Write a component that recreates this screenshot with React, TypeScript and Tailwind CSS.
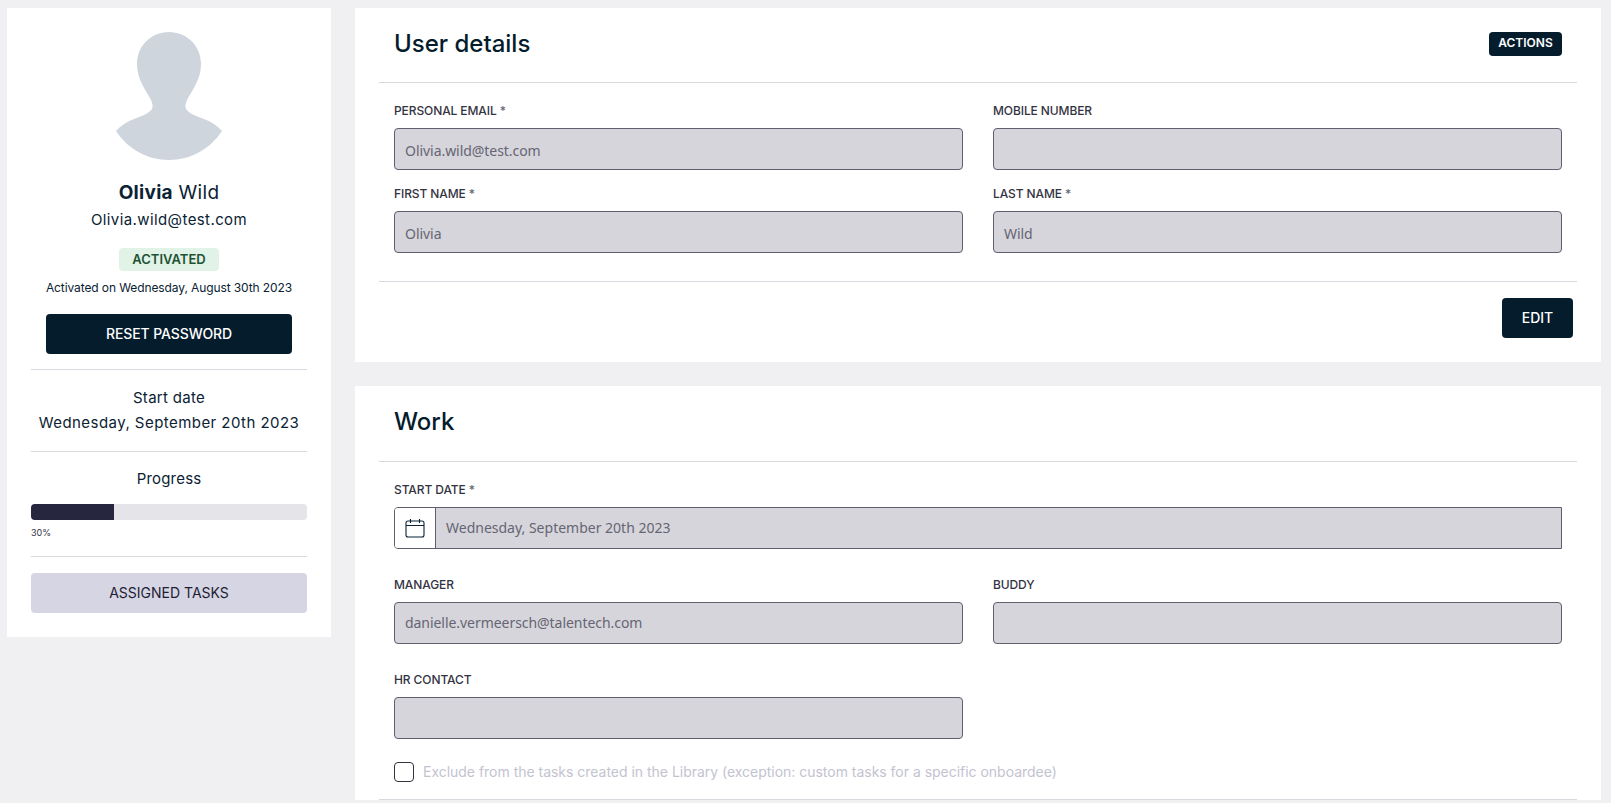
const sans = "font-['Inter','Liberation_Sans',sans-serif]"

const Divider = ({ className = '' }: { className?: string }) => <div className={`h-px bg-[#d8d8de] ${className}`} />

const Field = ({ label, value, required, inputClass = '' }: { label: string; value?: string; required?: boolean; inputClass?: string }) => (
  <div>
    <label className={`block h-[18px] text-[12px] leading-[18px] font-medium tracking-[-0.1px] text-[#33333f] ${sans}`}>
      {label}
      {required && <span className="text-[#66667a]"> *</span>}
    </label>
    <div className={`mt-2 flex h-[42px] items-center rounded border border-[#5f5f6e] bg-[#d6d5db] px-2.5 font-['Noto_Sans',sans-serif] text-[14px] tracking-[-0.05px] text-[#656573] ${inputClass}`}>
      {value}
    </div>
  </div>
)

const CalendarIcon = () => (
  <svg width="20" height="20" viewBox="0 0 20 20" fill="none" stroke="#0a2233" strokeWidth="1.1">
    <rect x="1" y="3" width="18" height="16" rx="2" />
    <path d="M1 7.5h18M5.5 1v4M14.5 1v4" />
  </svg>
)

const App = () => {
  return (
    <div className={`flex h-screen items-start gap-6 overflow-hidden bg-[#f0f0f2] pt-2 pr-2.5 pl-[7px] ${sans}`}>
      <aside className="w-[324px] shrink-0 bg-white px-6 pt-6 pb-6 text-center text-[#0a2233]">
        <svg className="mx-auto" width="106" height="128" viewBox="0 0 106 128" fill="#cfd5dd">
          <path d="M53 0C35 0 21 14 21 32C21 48 30 58 35 68C38 75 37 78 30 82C20 87 10 88 0 99C12 117 31 128 53 128C75 128 94 117 106 99C96 88 86 87 76 82C69 78 68 75 71 68C76 58 85 48 85 32C85 14 71 0 53 0Z" />
        </svg>
        <h2 className="mt-[21px] text-[19px] leading-[24px] tracking-[0.3px]">
          <span className="font-bold">Olivia</span> Wild
        </h2>
        <p className="mt-[3px] text-[15px] leading-[24px] tracking-[0.4px]">Olivia.wild@test.com</p>
        <span className="mx-auto mt-4 block h-[23px] w-[100px] rounded bg-[#e1f3e7] text-[13px] leading-[23px] font-semibold text-[#1e5233]">
          ACTIVATED
        </span>
        <p className="mt-2 text-[12px] leading-[18px] tracking-[-0.1px]">Activated on Wednesday, August 30th 2023</p>
        <button className="mx-[15px] mt-[17px] h-10 w-[246px] rounded bg-[#041c2c] pb-0.5 text-[14px] font-medium tracking-[-0.1px] text-white">
          RESET PASSWORD
        </button>
        <Divider className="mt-[15px]" />
        <p className="mt-4 text-[15px] leading-[24px] tracking-[0.3px]">Start date</p>
        <p className="mt-px text-[15px] leading-[24px] tracking-[0.45px] whitespace-nowrap">Wednesday, September 20th 2023</p>
        <Divider className="mt-4" />
        <p className="mt-[15px] text-[15px] leading-[24px] tracking-[0.2px]">Progress</p>
        <div className="mt-[13px] h-4 overflow-hidden rounded bg-[#e4e4e9]">
          <div className="h-full w-[83px] bg-[#26263f]" />
        </div>
        <p className="mt-2 text-left text-[9px] leading-[10px] text-[#33333f]">30%</p>
        <Divider className="mt-[18px]" />
        <button className="mt-4 h-10 w-full rounded bg-[#d6d5e3] pb-0.5 text-[14px] text-[#1d1d33]">ASSIGNED TASKS</button>
      </aside>

      <main className="flex min-w-0 flex-1 flex-col gap-6">
        <section className="h-[354px] bg-white px-6">
          <div className="flex h-[74px] items-center justify-between px-[15px]">
            <h1 className="mb-[3px] text-[24px] font-medium text-[#041c2c]">User details</h1>
            <button className="mb-[2px] h-6 w-[73px] rounded bg-[#041c2c] pb-0.5 text-[12px] font-semibold text-white">ACTIONS</button>
          </div>
          <Divider />
          <div className="grid grid-cols-2 gap-x-[30px] gap-y-[15px] px-[15px] pt-[19px]">
            <Field label="PERSONAL EMAIL" value="Olivia.wild@test.com" required inputClass="pt-0.5" />
            <Field label="MOBILE NUMBER" />
            <Field label="FIRST NAME" value="Olivia" required inputClass="pt-0.5" />
            <Field label="LAST NAME" value="Wild" required inputClass="pt-0.5" />
          </div>
          <Divider className="mt-[28px]" />
          <div className="flex justify-end pt-4 pr-1">
            <button className="h-10 w-[71px] rounded bg-[#041c2c] pb-0.5 text-[14px] font-medium text-white">EDIT</button>
          </div>
        </section>

        <section className="bg-white px-6">
          <div className="flex h-[75px] items-center px-[15px]">
            <h1 className="mt-[-3px] text-[24px] font-medium text-[#041c2c]">Work</h1>
          </div>
          <Divider />
          <div className="px-[15px] pt-[19px]">
            <label className="block h-[18px] text-[12px] leading-[18px] font-medium tracking-[-0.1px] text-[#33333f]">
              START DATE <span className="text-[#66667a]">*</span>
            </label>
            <div className="mt-2 flex h-[42px] overflow-hidden rounded-l border border-[#5f5f6e]">
              <div className="flex w-[41px] items-center justify-center border-r border-[#5f5f6e] bg-white">
                <CalendarIcon />
              </div>
              <div className="flex flex-1 items-center bg-[#d6d5db] px-2.5 pb-0.5 font-['Noto_Sans',sans-serif] text-[14px] text-[#656573]">
                Wednesday, September 20th 2023
              </div>
            </div>
            <div className="mt-[27px] grid grid-cols-2 gap-x-[30px] gap-y-[27px]">
              <Field label="MANAGER" value="danielle.vermeersch@talentech.com" inputClass="pb-0.5" />
              <Field label="BUDDY" />
              <Field label="HR CONTACT" />
            </div>
            <div className="mt-[22px] flex items-center gap-[9px]">
              <span className="size-5 rounded border border-[#33333f] bg-white" />
              <span className="text-[14px] tracking-[-0.02px] text-[#c3c3d0]">
                Exclude from the tasks created in the Library (exception: custom tasks for a specific onboardee)
              </span>
            </div>
          </div>
          <Divider className="mt-[17px]" />
        </section>
      </main>
    </div>
  )
}

export default App
